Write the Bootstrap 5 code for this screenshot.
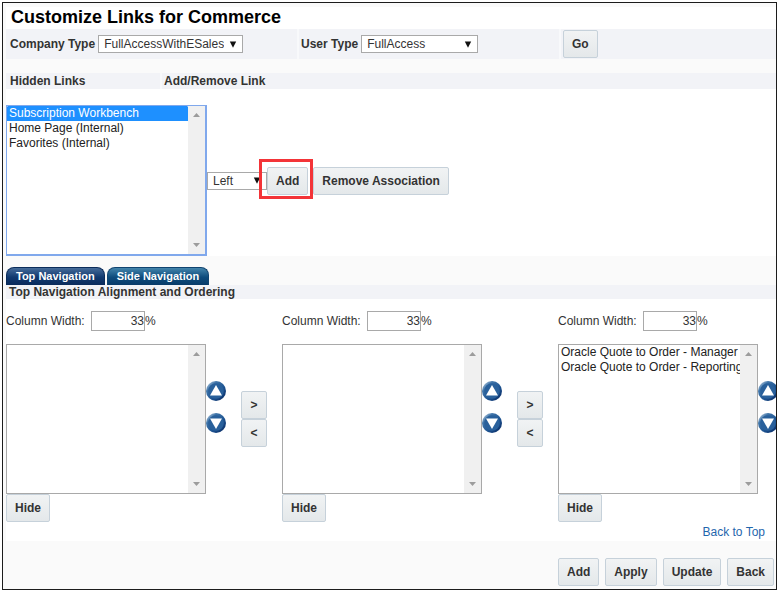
<!DOCTYPE html>
<html lang="en">
<head>
<meta charset="utf-8">
<meta name="viewport" content="width=device-width, initial-scale=1">
<title>Customize Links for Commerce</title>
<link href="https://cdn.jsdelivr.net/npm/bootstrap@5.3.0/dist/css/bootstrap.min.css" rel="stylesheet">
<style>
  body { font: 12px/16px "Liberation Sans", Arial, sans-serif; color: #333; background: #fff; }
  .app-frame { margin: 2px; border: 1px solid #1c1c1c; background: #fafafa; padding: 4px 0 0 3px; overflow: hidden; }
  .page-title { font-size: 18px; line-height: 20px; font-weight: 700; color: #000; padding: 0 0 2px 5px; }
  .strip { background: #f2f3f7; font-weight: 700; }
  .strip > * + * { border-left: 2px solid #f8f9fb; }
  .filter-strip { height: 30px; margin-bottom: 14px; }
  .filter-strip > * { gap: 3px; }
  .cell-company { width: 291px; padding-left: 4px; }
  .cell-user { width: 262px; padding-left: 2px; }
  .cell-go { padding-left: 2px; }
  .cell-hidden { width: 154px; padding-left: 4px; }
  .cell-assoc { padding-left: 2px; }
  .drop {
    appearance: none; height: 18px; line-height: 16px; padding: 0 18px 0 5px; color: #333;
    border: 1px solid #a9a9a9; border-radius: 0;
    background: #fff url("data:image/svg+xml,%3Csvg xmlns='http://www.w3.org/2000/svg' viewBox='0 0 8 7'%3E%3Cpath d='M0.8 0.5h6.4L4 6.8z' fill='%23111'/%3E%3C/svg%3E") no-repeat right 5px center / 8px 7px;
  }
  .drop-company { width: 145px; }
  .drop-user { width: 117px; }
  .drop-side { width: 60px; }
  .tool-btn {
    --bs-btn-font-size: 12px; --bs-btn-font-weight: 700; --bs-btn-line-height: 16px;
    --bs-btn-padding-x: 8px; --bs-btn-padding-y: 5px; --bs-btn-border-radius: 2px;
    --bs-btn-color: #333; --bs-btn-border-color: #c6d1da;
    --bs-btn-hover-color: #111; --bs-btn-hover-border-color: #9fb2c2;
    background: linear-gradient(#f1f3f4, #e4e8ea);
  }
  .add-wrap { margin-right: 5px; }
  .list-frame { width: 200px; height: 150px; border: 1px solid #a9a9a9; background: #fff; flex: none; }
  .list-frame.is-active { border-color: #80a8ec; border-width: 1px 2px 2px 1px; width: 201px; height: 151px; }
  .list-frame select { flex: 1; min-width: 0; height: 100%; border: 0; padding: 0; outline: 0; background: #fff; color: #222; overflow: hidden; scrollbar-width: none; }
  .list-frame select::-webkit-scrollbar { display: none; }
  .list-frame option { padding: 0 2px; min-height: 15px; line-height: 15px; }
  .list-frame option:checked { background: #1e90ff linear-gradient(#1e90ff, #1e90ff); color: #fff; -webkit-text-fill-color: #fff; }
  .list-rail { width: 17px; background: #f0f0f0; padding: 7px 0; }
  .list-rail svg { width: 7px; height: 4px; fill: #9c9c9c; }
  .ring { position: absolute; inset: -8px -5px -4px -8px; border: 3px solid #f33438; pointer-events: none; }
  .tab-row { padding-top: 11px; gap: 2px; }
  .nav-tab {
    height: 18px; padding: 0 9px; font-size: 11px; line-height: 16px; font-weight: 700; color: #fff; text-decoration: none;
    border: 1px solid #0b2c5a; border-bottom: 0; border-radius: 8px 8px 0 0; background: linear-gradient(#456b99, #11396f 55%, #0a2b5c);
  }
  .nav-tab.is-side { background: linear-gradient(#4384ab, #0d4b7c 55%, #083b69); border-color: #104470; }
  .nav-tab:hover { color: #fff; }
  .section-strip { font-size: 12px; line-height: 14px; padding-left: 3px; }
  .nav-panel { padding-top: 12px; }
  .col-block { flex: 1 0 276px; }
  .col-block:last-child { flex: none; width: 221px; }
  .pct-row { margin-bottom: 13px; }
  .pct-row label { width: 85px; }
  .pct { width: 54px; height: 20px; border: 1px solid #a9a9a9; padding: 0 0 0 2px; text-align: right; color: #333; background: #fff; }
  .order-tools { display: grid; gap: 12px; padding-bottom: 24px; }
  .round-btn { width: 20px; height: 20px; padding: 0; border: 0; background: none; }
  .round-btn svg, .list-rail svg { display: block; }
  .move-btn { width: 26px; height: 28px; --bs-btn-padding-x: 0; }
  .top-row { padding: 2px 11px 1px 0; }
  .top-link { color: #1f66ad; text-decoration: none; }
  .foot { padding: 17px 2px 3px 0; gap: 6px; }
</style>
</head>
<body>
<svg width="0" height="0" class="position-absolute" aria-hidden="true">
  <defs>
    <linearGradient id="orb" x1="0" y1="0" x2="1" y2="1">
      <stop offset="0" stop-color="#d5e2ef"/><stop offset=".28" stop-color="#3f74a8"/><stop offset=".6" stop-color="#1d5391"/><stop offset="1" stop-color="#06245c"/>
    </linearGradient>
    <symbol id="up" viewBox="0 0 20 20"><circle cx="10" cy="10" r="10" fill="url(#orb)"/><circle cx="10" cy="10" r="7.8" fill="#29609b"/><path d="M10 4 16 14.6H4z" fill="#fff"/></symbol>
    <symbol id="down" viewBox="0 0 20 20"><circle cx="10" cy="10" r="10" fill="url(#orb)"/><circle cx="10" cy="10" r="7.8" fill="#29609b"/><path d="M10 16 16 5.4H4z" fill="#fff"/></symbol>
    <symbol id="rail-up" viewBox="0 0 7 4"><path d="M0 4 3.5 0 7 4z"/></symbol>
    <symbol id="rail-down" viewBox="0 0 7 4"><path d="M0 0 3.5 4 7 0z"/></symbol>
  </defs>
</svg>
<main class="app-frame" id="top">
  <h1 class="page-title bg-white m-0">Customize Links for Commerce</h1>

  <div class="strip filter-strip d-flex">
    <div class="cell-company d-flex align-items-center">
      <label for="company">Company Type</label>
      <select id="company" class="drop drop-company"><option>FullAccessWithESales</option></select>
    </div>
    <div class="cell-user d-flex align-items-center">
      <label for="user">User Type</label>
      <select id="user" class="drop drop-user"><option>FullAccess</option></select>
    </div>
    <div class="cell-go d-flex align-items-center flex-fill"><button type="button" class="btn tool-btn">Go</button></div>
  </div>

  <div class="strip d-flex">
    <label for="hidden-links" class="cell-hidden">Hidden Links</label>
    <div class="cell-assoc flex-fill">Add/Remove Link</div>
  </div>

  <section class="bg-white pt-3 d-flex align-items-center">
    <div class="list-frame is-active d-flex">
      <select id="hidden-links" multiple autofocus>
        <option selected>Subscription Workbench</option>
        <option>Home Page (Internal)</option>
        <option>Favorites (Internal)</option>
      </select>
      <div class="list-rail d-flex flex-column justify-content-between align-items-center" aria-hidden="true"><svg><use href="#rail-up"/></svg><svg><use href="#rail-down"/></svg></div>
    </div>
    <select class="drop drop-side" aria-label="Side"><option>Left</option></select>
    <div class="add-wrap position-relative z-1">
      <button type="button" class="btn tool-btn d-block">Add</button>
      <span class="ring"></span>
    </div>
    <button type="button" class="btn tool-btn">Remove Association</button>
  </section>

  <nav class="tab-row d-flex">
    <a class="nav-tab" href="#nav-panel">Top Navigation</a>
    <a class="nav-tab is-side" href="#nav-panel">Side Navigation</a>
  </nav>
  <h2 class="strip section-strip m-0">Top Navigation Alignment and Ordering</h2>

  <section id="nav-panel" class="bg-white nav-panel">
    <div class="d-flex">
      <div class="col-block">
        <div class="pct-row d-flex align-items-center"><label for="w1">Column Width:</label><input id="w1" class="pct" value="33"><span>%</span></div>
        <div class="d-flex align-items-center">
          <div class="list-frame d-flex"><select multiple aria-label="Column 1 links"></select>
            <div class="list-rail d-flex flex-column justify-content-between align-items-center" aria-hidden="true"><svg><use href="#rail-up"/></svg><svg><use href="#rail-down"/></svg></div></div>
          <div class="order-tools"><button type="button" class="round-btn" aria-label="Move up"><svg width="20" height="20"><use href="#up"/></svg></button><button type="button" class="round-btn" aria-label="Move down"><svg width="20" height="20"><use href="#down"/></svg></button></div>
          <div class="d-flex flex-column mx-auto"><button type="button" class="btn tool-btn move-btn">&gt;</button><button type="button" class="btn tool-btn move-btn">&lt;</button></div>
        </div>
        <button type="button" class="btn tool-btn d-block">Hide</button>
      </div>
      <div class="col-block">
        <div class="pct-row d-flex align-items-center"><label for="w2">Column Width:</label><input id="w2" class="pct" value="33"><span>%</span></div>
        <div class="d-flex align-items-center">
          <div class="list-frame d-flex"><select multiple aria-label="Column 2 links"></select>
            <div class="list-rail d-flex flex-column justify-content-between align-items-center" aria-hidden="true"><svg><use href="#rail-up"/></svg><svg><use href="#rail-down"/></svg></div></div>
          <div class="order-tools"><button type="button" class="round-btn" aria-label="Move up"><svg width="20" height="20"><use href="#up"/></svg></button><button type="button" class="round-btn" aria-label="Move down"><svg width="20" height="20"><use href="#down"/></svg></button></div>
          <div class="d-flex flex-column mx-auto"><button type="button" class="btn tool-btn move-btn">&gt;</button><button type="button" class="btn tool-btn move-btn">&lt;</button></div>
        </div>
        <button type="button" class="btn tool-btn d-block">Hide</button>
      </div>
      <div class="col-block">
        <div class="pct-row d-flex align-items-center"><label for="w3">Column Width:</label><input id="w3" class="pct" value="33"><span>%</span></div>
        <div class="d-flex align-items-center">
          <div class="list-frame d-flex"><select multiple aria-label="Column 3 links"><option>Oracle Quote to Order - Manager</option><option>Oracle Quote to Order - Reporting</option></select>
            <div class="list-rail d-flex flex-column justify-content-between align-items-center" aria-hidden="true"><svg><use href="#rail-up"/></svg><svg><use href="#rail-down"/></svg></div></div>
          <div class="order-tools"><button type="button" class="round-btn" aria-label="Move up"><svg width="20" height="20"><use href="#up"/></svg></button><button type="button" class="round-btn" aria-label="Move down"><svg width="20" height="20"><use href="#down"/></svg></button></div>
        </div>
        <button type="button" class="btn tool-btn d-block">Hide</button>
      </div>
    </div>
    <div class="top-row text-end"><a class="top-link" href="#top">Back to Top</a></div>
  </section>

  <div class="foot d-flex justify-content-end">
    <button type="button" class="btn tool-btn">Add</button>
    <button type="button" class="btn tool-btn">Apply</button>
    <button type="button" class="btn tool-btn">Update</button>
    <button type="button" class="btn tool-btn">Back</button>
  </div>
</main>
</body>
</html>
